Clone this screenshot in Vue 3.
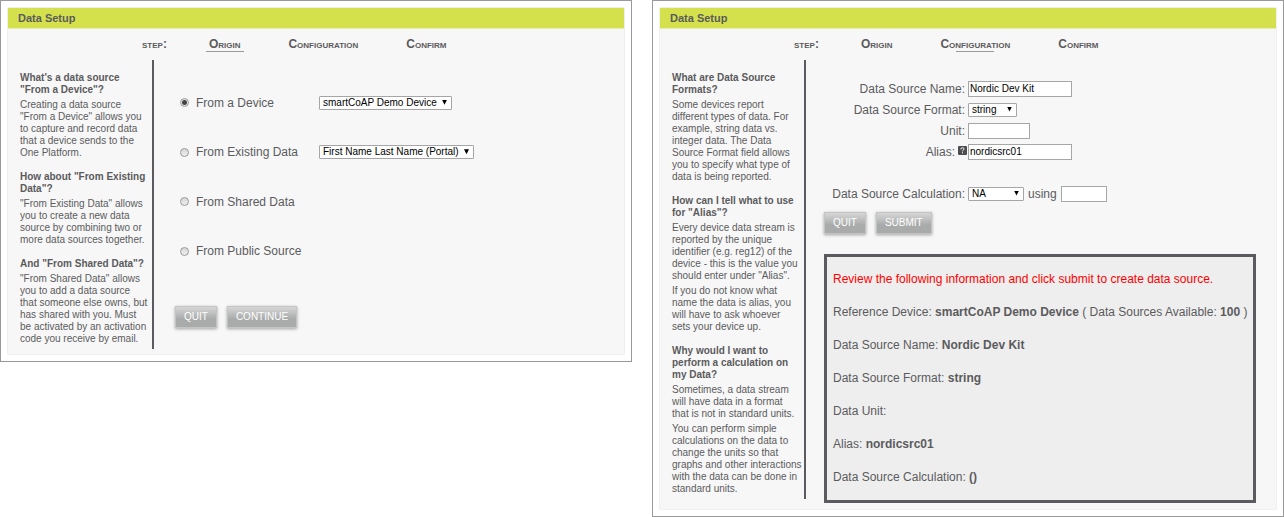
<script setup>
import { ref } from 'vue'

const steps = ['Origin', 'Configuration', 'Confirm']

const origin = ref('device')
const origins = [
  { value: 'device', label: 'From a Device', option: 'smartCoAP Demo Device' },
  { value: 'existing', label: 'From Existing Data', option: 'First Name Last Name (Portal)' },
  { value: 'shared', label: 'From Shared Data' },
  { value: 'public', label: 'From Public Source' },
]

const originHelp = [
  {
    title: 'What\'s a data source "From a Device"?',
    text: ['Creating a data source\n"From a Device" allows you to capture and record data that a device sends to the One Platform.'],
  },
  {
    title: 'How about "From Existing Data"?',
    text: ['"From Existing Data" allows you to create a new data source by combining two or more data sources together.'],
  },
  {
    title: 'And "From Shared Data"?',
    text: ['"From Shared Data" allows you to add a data source\nthat someone else owns, but has shared with you. Must\nbe activated by an activation code you receive by email.'],
  },
]

const configHelp = [
  {
    title: 'What are Data Source Formats?',
    text: ['Some devices report\ndifferent types of data. For example, string data vs. integer data. The Data Source Format field allows you to specify what type of data is being reported.'],
  },
  {
    title: 'How can I tell what to use for "Alias"?',
    text: [
      'Every device data stream is reported by the unique identifier (e.g. reg12) of the device - this is the value you should enter under "Alias".',
      'If you do not know what name the data is alias, you will have to ask whoever\nsets your device up.',
    ],
  },
  {
    title: 'Why would I want to perform a calculation on my Data?',
    text: [
      'Sometimes, a data stream will have data in a format\nthat is not in standard units.',
      'You can perform simple calculations on the data to change the units so that graphs and other interactions with the data can be done in standard units.',
    ],
  },
]

const name = ref('Nordic Dev Kit')
const format = ref('string')
const unit = ref('')
const alias = ref('nordicsrc01')
const calculation = ref('NA')
const operand = ref('')
</script>

<template>
  <main class="page">
    <section class="panel">
      <div class="card">
        <h1 class="title">Data Setup</h1>
        <div class="steps">
          <span class="lead">step:</span>
          <span v-for="(s, i) in steps" :key="s" class="step" :class="{ active: i === 0 }">{{ s }}</span>
        </div>
        <div class="body">
          <aside class="help">
            <section v-for="h in originHelp" :key="h.title" class="topic">
              <h2>{{ h.title }}</h2>
              <p v-for="t in h.text" :key="t">{{ t }}</p>
            </section>
          </aside>
          <form class="content origin" @submit.prevent>
            <div class="choices">
              <div v-for="o in origins" :key="o.value" class="choice">
                <label class="pick">
                  <input v-model="origin" type="radio" name="origin" :value="o.value" />
                  <span>{{ o.label }}</span>
                </label>
                <span v-if="o.option" class="drop">
                  <select :aria-label="o.label"><option>{{ o.option }}</option></select>
                </span>
              </div>
            </div>
            <div class="actions">
              <button type="button">QUIT</button>
              <button type="submit">CONTINUE</button>
            </div>
          </form>
        </div>
      </div>
    </section>

    <section class="panel">
      <div class="card">
        <h1 class="title">Data Setup</h1>
        <div class="steps">
          <span class="lead">step:</span>
          <span v-for="(s, i) in steps" :key="s" class="step" :class="{ active: i === 1 }">{{ s }}</span>
        </div>
        <div class="body">
          <aside class="help">
            <section v-for="h in configHelp" :key="h.title" class="topic">
              <h2>{{ h.title }}</h2>
              <p v-for="t in h.text" :key="t">{{ t }}</p>
            </section>
          </aside>
          <form class="content config" @submit.prevent>
            <div class="fields">
              <div class="field">
                <label for="name">Data Source Name:</label>
                <input id="name" v-model="name" class="text" type="text" />
              </div>
              <div class="field">
                <label for="format">Data Source Format:</label>
                <span class="drop short">
                  <select id="format" v-model="format"><option>string</option></select>
                </span>
              </div>
              <div class="field">
                <label for="unit">Unit:</label>
                <input id="unit" v-model="unit" class="text medium" type="text" />
              </div>
              <div class="field aliased">
                <div class="tagged">
                  <label for="alias">Alias:</label>
                  <svg class="hint" viewBox="0 0 9 9" aria-hidden="true">
                    <rect width="9" height="9" rx="1" fill="#4d4d4f" />
                    <path d="M3 3.4V2.8Q3 1.7 4.5 1.7T6 2.9Q6 3.7 5.2 4.1 4.5 4.5 4.5 5.3M4.5 6.3V7.4" fill="none" stroke="#fff" />
                  </svg>
                </div>
                <input id="alias" v-model="alias" class="text" type="text" />
              </div>
            </div>
            <div class="field">
              <label for="calc">Data Source Calculation:</label>
              <div class="pair">
                <span class="drop mid">
                  <select id="calc" v-model="calculation"><option>NA</option></select>
                </span>
                <label for="operand">using</label>
                <input id="operand" v-model="operand" class="text small" type="text" />
              </div>
            </div>
            <div class="actions">
              <button type="button">QUIT</button>
              <button type="submit">SUBMIT</button>
            </div>
            <div class="review">
              <p class="warn">Review the following information and click submit to create data source.</p>
              <p>Reference Device: <b>smartCoAP Demo Device</b> ( Data Sources Available: <b>100</b> )</p>
              <p>Data Source Name: <b>Nordic Dev Kit</b></p>
              <p>Data Source Format: <b>string</b></p>
              <p>Data Unit:</p>
              <p>Alias: <b>nordicsrc01</b></p>
              <p>Data Source Calculation: <b>()</b></p>
            </div>
          </form>
        </div>
      </div>
    </section>
  </main>
</template>

<style>
body {
  background: #fff;
}
</style>

<style scoped>
* {
  box-sizing: border-box;
  margin: 0;
}
.page {
  display: grid;
  grid-template-columns: 1fr 1fr;
  align-items: start;
  gap: 20px;
  font: 12px/16px "Liberation Sans", Arial, sans-serif;
  color: #5b5b5d;
}
.panel {
  border: 1px solid #999;
  padding: 6px;
}
.card {
  border: 1px solid #efefef;
  border-radius: 2px;
  background: #f7f7f7;
}
.title {
  border-bottom: 1px solid #e6edb0;
  padding: 0 10px;
  background: #d4e04c;
  font-size: 11px;
  line-height: 20px;
}
.steps {
  display: flex;
  gap: 48px;
  height: 31px;
  padding-left: 134px;
  font-variant: small-caps;
  font-weight: bold;
  line-height: 30px;
}
.step {
  position: relative;
}
.lead {
  margin-right: -6px;
}
.step.active::after {
  content: "";
  position: absolute;
  top: 22px;
  left: 50%;
  width: 38px;
  height: 1px;
  margin-left: -19px;
  background: #999;
}
.body {
  display: grid;
  grid-template-columns: 146px 1fr;
  align-items: start;
}
.help {
  margin-bottom: 5px;
  border-right: 2px solid #5b5b5f;
  padding: 12px 0 4px 12px;
  font-size: 10px;
  line-height: 12px;
}
.topic + .topic {
  margin-top: 12px;
}
.help h2 {
  padding-right: 4px;
  font-size: 10px;
  line-height: 12px;
}
.help p {
  margin-top: 3px;
  white-space: pre-line;
}
.origin {
  padding: 18px 20px 0 21px;
}
.choices {
  display: grid;
  grid-auto-rows: 1fr;
  min-height: 198px;
}
.choice {
  display: grid;
  grid-template-columns: 144px 1fr;
  align-items: center;
}
.pick {
  display: flex;
  align-items: center;
  gap: 7px;
  padding-left: 5px;
}
input[type="radio"] {
  appearance: none;
  width: 9px;
  height: 9px;
  border: 1px solid #999;
  border-radius: 50%;
  background: linear-gradient(#d8d8d8, #eee);
}
input[type="radio"]:checked {
  background: radial-gradient(circle, #444 2px, #e6e6e6 3px);
}
.drop {
  position: relative;
  display: inline-block;
  justify-self: start;
  height: 14px;
}
.drop::after {
  content: "";
  position: absolute;
  top: 4px;
  right: 5px;
  width: 5px;
  height: 5px;
  background: #000;
  clip-path: polygon(0 0, 100% 0, 50% 100%);
  pointer-events: none;
}
select {
  appearance: none;
  display: block;
  width: 100%;
  height: 14px;
  border: 1px solid #a6a6a6;
  border-radius: 1px;
  padding: 0 14px 0 3px;
  background: #fff;
  color: #000;
  font: 10px/12px "Liberation Sans", Arial, sans-serif;
}
.short {
  width: 49px;
}
.mid {
  width: 56px;
}
.actions {
  display: flex;
  gap: 10px;
}
.origin .actions {
  margin-top: 30px;
}
button {
  height: 22px;
  border: 1px solid #c4c4c4;
  padding: 0 8px 1px;
  background: linear-gradient(#d6d6d6, #a9abaa 60%, #a9abaa);
  box-shadow: 0 1px 3px rgba(0, 0, 0, 0.35);
  color: #fff;
  font: 10px/18px "Liberation Sans", Arial, sans-serif;
}
.config {
  padding: 18px 20px 6px 18px;
}
.fields {
  margin-bottom: 21px;
}
.field {
  display: grid;
  grid-template-columns: 141px 1fr;
  align-items: center;
  column-gap: 3px;
  height: 21px;
}
.field > label {
  text-align: right;
}
.aliased {
  grid-template-columns: 143px 1fr;
  column-gap: 1px;
}
.tagged {
  display: flex;
  align-items: center;
  justify-content: flex-end;
  gap: 3px;
}
.hint {
  width: 9px;
  height: 9px;
  margin-bottom: 3px;
}
.text {
  width: 104px;
  height: 16px;
  border: 1px solid #a6a6a6;
  padding: 0 1px;
  background: #fff;
  color: #000;
  font: 10px/12px "Liberation Sans", Arial, sans-serif;
}
.medium {
  width: 62px;
}
.small {
  width: 46px;
}
.pair {
  display: flex;
  align-items: center;
  gap: 4px;
}
.config .actions {
  margin-top: 8px;
}
.review {
  margin-top: 20px;
  border: 3px solid #5b5b5f;
  padding: 6px 0 6px 6px;
  background: #eee;
}
.review p {
  line-height: 33px;
}
.review .warn {
  color: #f00;
}
</style>
